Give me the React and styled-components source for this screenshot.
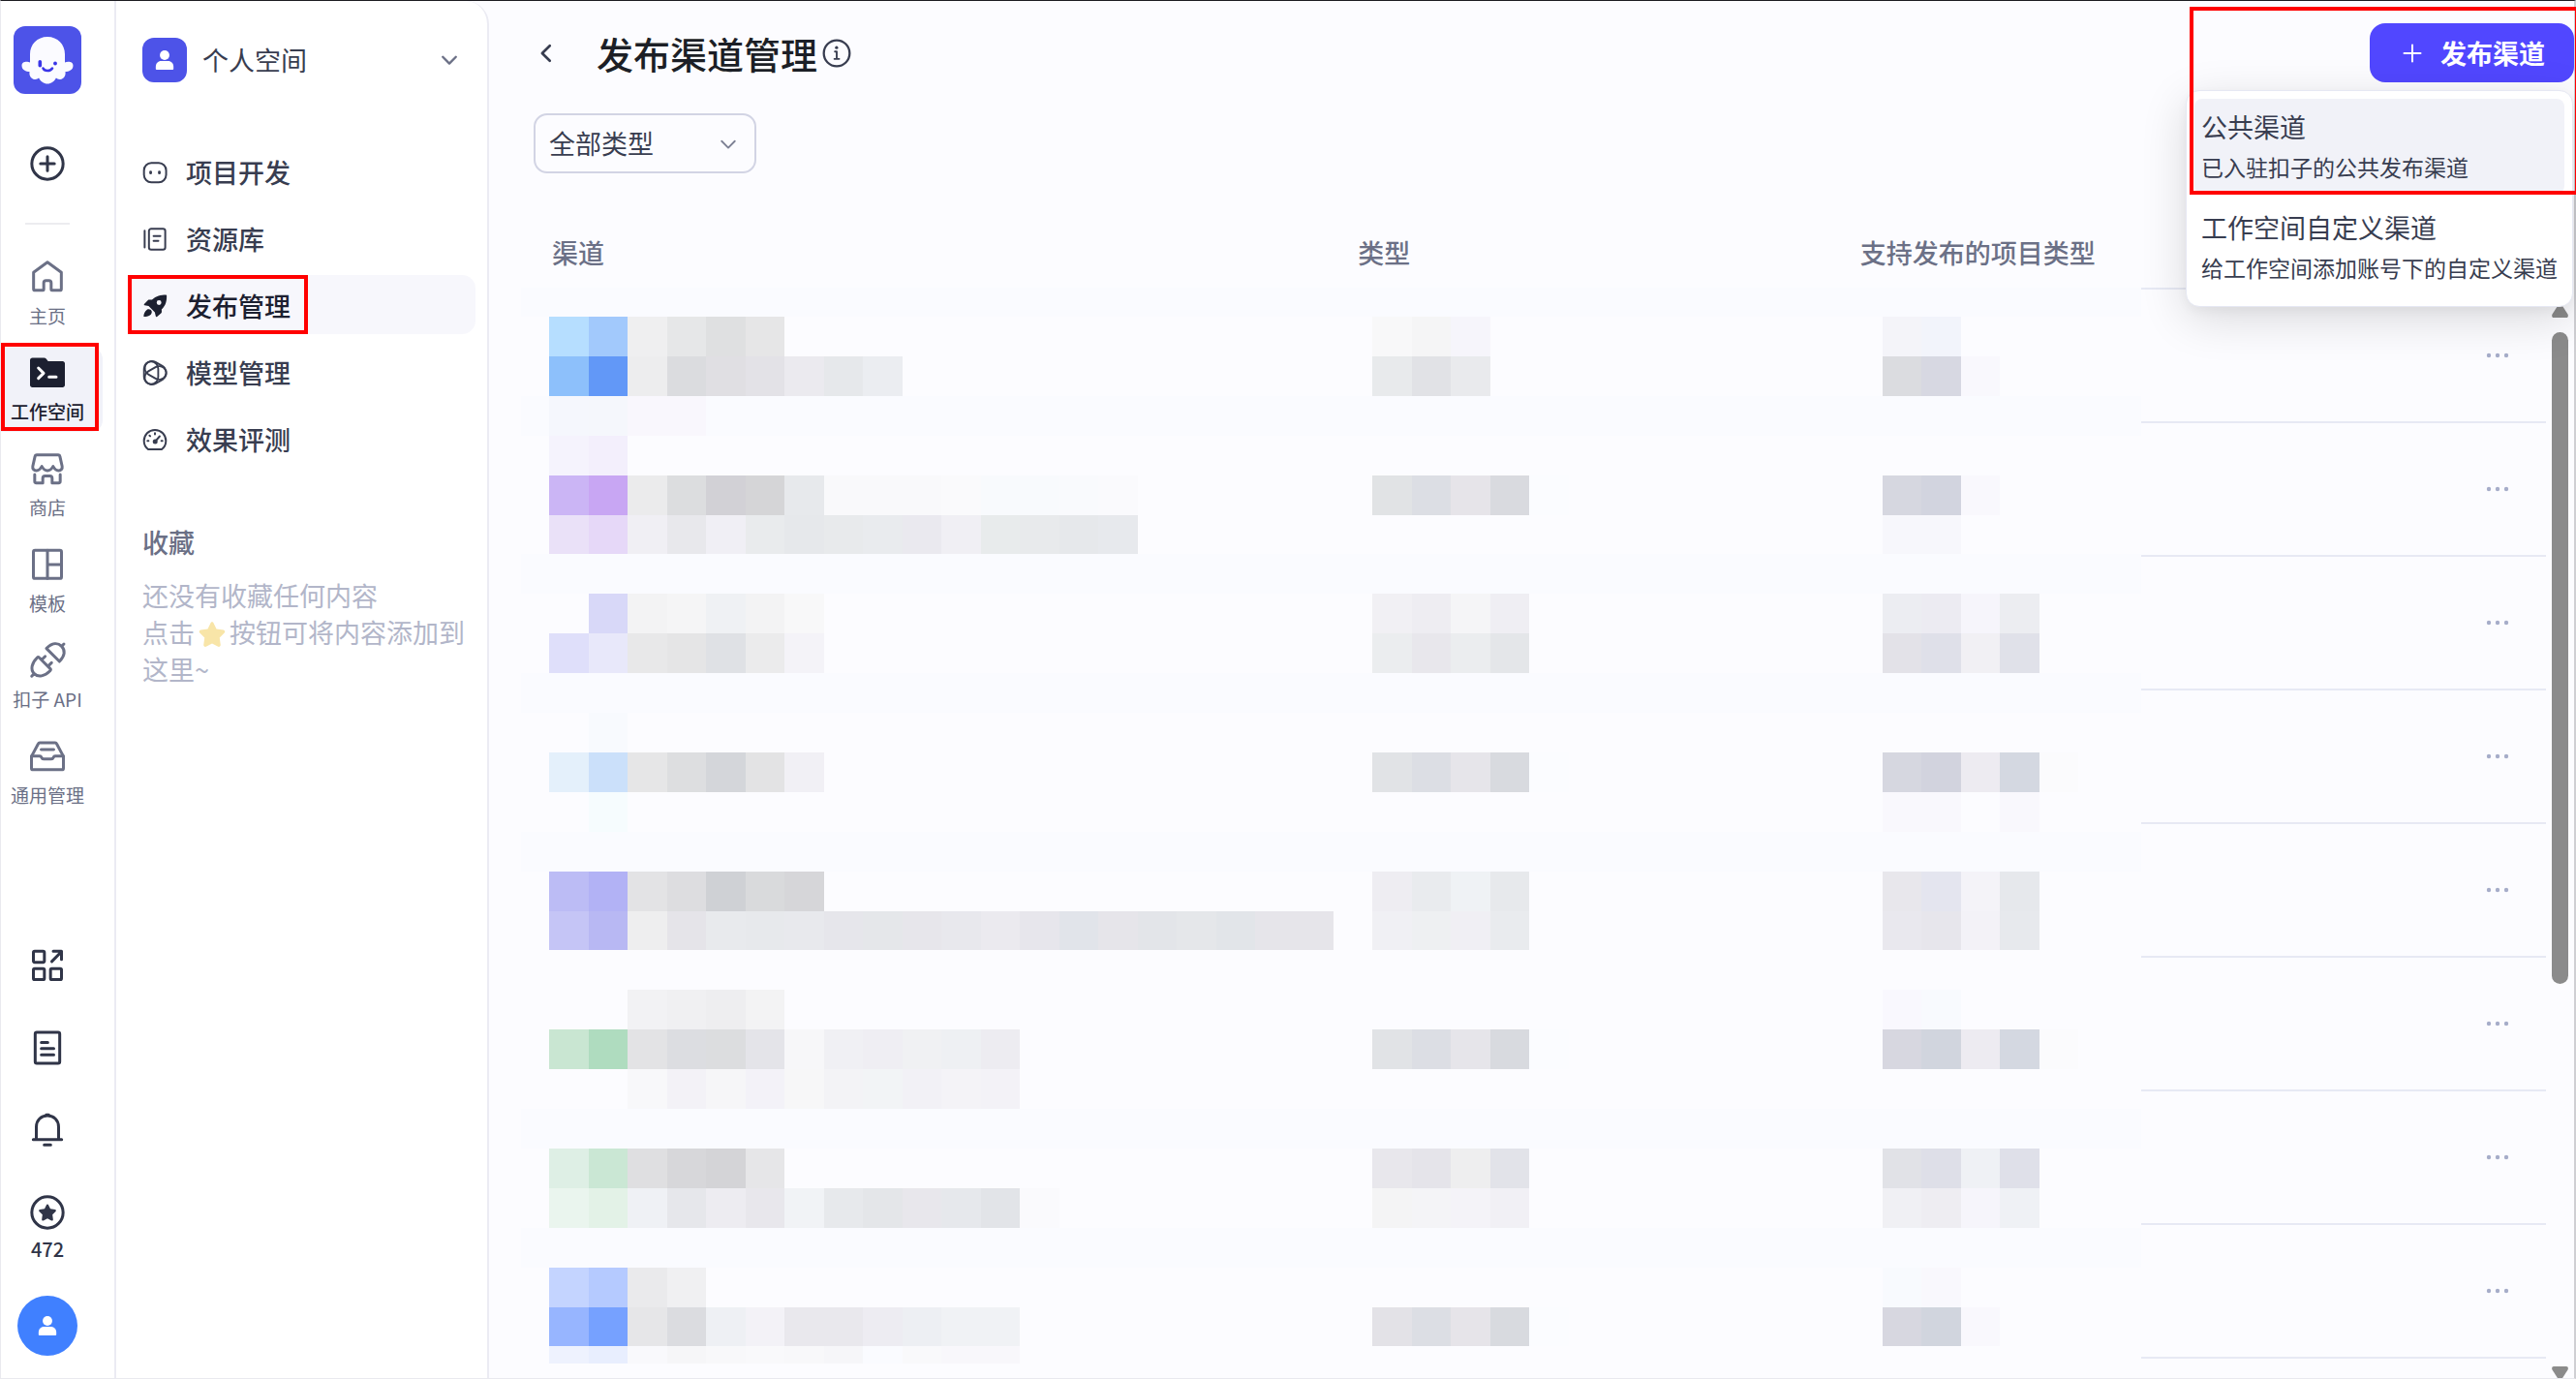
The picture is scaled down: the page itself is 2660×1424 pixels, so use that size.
import React from "react";
import styled, { createGlobalStyle, css } from "styled-components";

/* ---------- icons ---------- */

const Line = ({ size = 40, width = 1.8, children, ...rest }) => (
  <svg
    width={size}
    height={size}
    viewBox="0 0 24 24"
    fill="none"
    stroke="currentColor"
    strokeWidth={width}
    strokeLinecap="round"
    strokeLinejoin="round"
    aria-hidden="true"
    {...rest}
  >
    {children}
  </svg>
);

const LogoIcon = () => (
  <svg width="70" height="70" viewBox="0 0 70 70" aria-hidden="true">
    <rect width="70" height="70" rx="12" fill="#4d53e8" />
    <path
      d="M35 11c-10.500 0-18 7.800-18 18v8.500c-2.500-1.200-8.500-1.500-8.500 3.200 0 4.600 4.500 6.300 8 6.300-.8 5.500 3 8.200 6 8 1.500 0 2.600-.8 3.600-1.500 1.800 3.600 5 6 8.900 6s7.100-2.400 8.900-6c1 .7 2.100 1.500 3.600 1.500 3 .2 6.800-2.500 6-8 3.500 0 8-1.700 8-6.300 0-4.700-6-4.400-8.500-3.200V29c0-10.200-7.500-18-18-18z"
      fill="#fbfbff"
    />
    <rect x="25.500" y="35" width="3.600" height="7.500" rx="1.800" fill="#3a35e8" />
    <circle cx="43" cy="38.500" r="1.900" fill="#3a35e8" />
    <path d="M30.500 43.500c1.500 3.300 7.500 3.300 9.500 0" stroke="#3a35e8" strokeWidth="2.600" strokeLinecap="round" fill="none" />
  </svg>
);

const PlusCircleIcon = () => (
  <Line>
    <circle cx="12" cy="12" r="9.700" />
    <path d="M12 7.700v8.600M7.700 12h8.600" />
  </Line>
);

const HomeIcon = () => (
  <Line>
    <path d="M3.400 9.100v10.200c0 .6.4 1 1 1h4.800c.3 0 .5-.2.5-.5v-4.200c0-.8.6-1.400 1.400-1.400h1.800c.8 0 1.400.6 1.400 1.400v4.200c0 .3.2.5.5.5h4.800c.6 0 1-.4 1-1V9.100L12 2.900z" />
  </Line>
);

const WorkspaceIcon = () => (
  <Line>
    <path
      d="M1.200 4.200c0-.9.6-1.500 1.500-1.500h7.200c.5 0 1 .2 1.300.6l1.200 1.500h8.900c.9 0 1.500.6 1.500 1.500v13.200c0 .9-.6 1.500-1.500 1.500H2.700c-.9 0-1.500-.6-1.500-1.500z"
      fill="currentColor"
      stroke="none"
    />
    <path d="M6.400 9l3.200 3.200-3.200 3.200M13 14.600h4.400" stroke="#fff" />
  </Line>
);

const StoreIcon = () => (
  <Line>
    <path d="M5.400 3.400h13.200c.6 0 1 .4 1.100.9l1.400 6.200c.3 1.600-.8 2.700-2.200 2.700-1.500 0-2.500-.9-3.400-2.600-.9 1.700-2 2.600-3.500 2.600s-2.600-.9-3.500-2.600c-.9 1.700-1.900 2.600-3.400 2.600-1.400 0-2.500-1.100-2.200-2.700l1.400-6.200c.1-.5.500-.9 1.100-.9z" />
    <path d="M4.100 15.600v4.200c0 .6.400 1 1 1h4v-2.800c0-.9.600-1.500 1.400-1.500h3c.8 0 1.400.6 1.400 1.500v2.800h4c.6 0 1-.4 1-1v-4.200" />
  </Line>
);

const TemplateIcon = () => (
  <Line>
    <rect x="3.300" y="3.200" width="17.400" height="17.400" rx="1" />
    <path d="M12 3.200v17.400M12 12h8.700" />
  </Line>
);

const PlugIcon = () => (
  <Line>
    <g transform="rotate(45 12 12)">
      <path d="M6.300 7.200h11.400c0-4.800-2.200-7.600-5.700-7.600S6.300 2.400 6.300 7.200zM12-.4v-2" />
      <path d="M7.300 14.400h9.400c.6 0 1 .4 1 1 0 4.800-2.200 8.200-5.700 8.200s-5.700-3.400-5.700-8.200c0-.6.4-1 1-1zM12 23.800v2M9.200 14.400v-3.200M14.800 14.400v-3.200" />
    </g>
  </Line>
);

const InboxIcon = () => (
  <Line>
    <path d="M2.100 12.100l4.200-7.900c.2-.4.500-.6.900-.6h9.600c.4 0 .7.200.9.600l4.200 7.900v7.200c0 .6-.4 1-1 1H3.100c-.6 0-1-.4-1-1z" />
    <path d="M2.100 11.900h5.100c.6 0 .9.300 1.100.8.300.7.600 1 1.300 1h4.800c.7 0 1-.3 1.300-1 .2-.5.5-.8 1.100-.8h5.100M8.100 7.800h7.800" />
  </Line>
);

const AppsIcon = () => (
  <Line>
    <rect x="3.300" y="3.200" width="6.800" height="6.800" rx=".8" />
    <rect x="3.300" y="13.900" width="6.800" height="6.800" rx=".8" />
    <rect x="13.900" y="13.900" width="6.800" height="6.800" rx=".8" />
    <path d="M14.700 9.500l5.800-5.900M15.600 3.200h5.100v5.100" />
  </Line>
);

const DocIcon = () => (
  <Line>
    <rect x="4.400" y="2.400" width="15.200" height="19.200" rx="1" />
    <path d="M8.200 8.700h4M8.200 12.500h7.700M8.200 16.300h7.700" />
  </Line>
);

const BellIcon = () => (
  <Line>
    <path d="M5.100 17.600V10c0-4.200 3-7 6.900-7s6.900 2.800 6.900 7v7.600M3.200 17.800h17.600M10 21.200h4M11.200 2.500h1.600" />
  </Line>
);

const starPath =
  "M12 6.900c.3 0 .5.200.6.400l1.200 2.500 2.900.4c.6.100.8.800.4 1.200l-2 2 .4 2.900c.1.600-.5 1-1 .8L12 15.800l-2.500 1.300c-.5.200-1.100-.2-1-.8l.4-2.900-2-2c-.4-.4-.2-1.100.4-1.200l2.900-.4 1.200-2.500c.1-.2.300-.4.600-.4z";

const CreditIcon = () => (
  <Line>
    <circle cx="12" cy="12" r="9.700" />
    <path d={starPath} fill="currentColor" stroke="none" />
  </Line>
);

const UserIcon = ({ size }) => (
  <svg width={size} height={size} viewBox="0 0 24 24" fill="#fff" aria-hidden="true">
    <circle cx="12" cy="6.600" r="5.400" />
    <path d="M2 19.500c0-3.800 2.400-6.500 6.200-6.500h7.600c3.800 0 6.200 2.700 6.200 6.500v2.200c0 .8-.6 1.300-1.300 1.300H3.300c-.7 0-1.300-.5-1.300-1.300z" />
  </svg>
);

const BotIcon = () => (
  <Line size={28} width={1.7}>
    <rect x="2.300" y="3.700" width="19.600" height="17" rx="6.500" />
    <path d="M8.200 11.600v1M15.900 11.600v1" strokeWidth="2.400" />
  </Line>
);

const LibraryIcon = () => (
  <Line size={28} width={1.7}>
    <rect x="6.700" y="2.800" width="14.400" height="18.400" rx="2" />
    <path d="M2.900 4.500v14.800M10.800 9.200h6M10.800 13.400h4.200" />
  </Line>
);

const RocketIcon = () => (
  <svg width="28" height="28" viewBox="0 0 24 24" fill="currentColor" aria-hidden="true">
    <path
      fillRule="evenodd"
      d="M21.700 2.100c.4 0 .7.300.7.700.1 4.700-.8 8.700-4.500 12.200l.1 2.200c0 .5-.2 1-.6 1.300l-3.500 3c-.5.400-1.100.1-1.200-.4l-.8-3.500-5.500-5.500-3.500-.7c-.6-.1-.8-.8-.4-1.200l3.300-3.300c.3-.4.800-.5 1.300-.5l2.300.1c3.600-3.500 7.800-4.400 12.300-4.400zM15.600 6.900a2.100 2.100 0 1 0 0 4.200 2.100 2.100 0 0 0 0-4.200z"
    />
    <path d="M5 15.200c1.500-1 3.600-.2 4.100 1.400.4 1.400-.2 2.800-1.500 3.600-1.600.9-3.500 1.300-5 1.300-.4 0-.6-.3-.6-.6.100-1.800.9-4.300 3-5.700z" />
  </svg>
);

const ModelIcon = () => (
  <Line size={28} width={1.6}>
    {[0, 120, 240].map((angle) => (
      <rect key={angle} x="2.300" y="2" width="12.600" height="20" rx="6.300" transform={`rotate(${angle} 11.200 12)`} />
    ))}
  </Line>
);

const GaugeIcon = () => (
  <Line size={28} width={1.7}>
    <path d="M6 20.600c-2.200-1.700-3.700-4.300-3.700-7.500 0-5.400 4.200-9.700 9.700-9.700s9.700 4.300 9.700 9.700c0 3.200-1.500 5.800-3.700 7.500z" />
    <path d="M12 6.300v.9M7.200 8.300l.6.600M5.400 13.100h.9M17.700 13.100h.9" />
    <path d="M12.400 13.400l3.800-4.400" />
    <circle cx="12.200" cy="13.700" r="1.300" fill="currentColor" />
  </Line>
);

const InfoIcon = () => (
  <Line size={32} width={1.7}>
    <circle cx="12" cy="12" r="10" />
    <path d="M10.600 10.700H12v5.500M10.200 16.400h3.700" strokeWidth="1.400" />
    <circle cx="11.900" cy="7.600" r="1.200" fill="currentColor" stroke="none" />
  </Line>
);

const Chevron = ({ size = 28, width = 2, color = "#6b7086", turn = 0 }) => (
  <Line size={size} width={width} stroke={color}>
    <path d="M6.200 9.200l5.800 5.900 5.800-5.900" transform={`rotate(${turn} 12 12)`} />
  </Line>
);

const PlusIcon = () => (
  <Line size={24} width={2}>
    <path d="M12 3.500v17M3.500 12h17" />
  </Line>
);

const DotsIcon = () => (
  <svg width="24" height="12" viewBox="0 0 24 12" fill="#a6adc9" aria-hidden="true">
    <circle cx="3" cy="6" r="2.200" />
    <circle cx="12" cy="6" r="2.200" />
    <circle cx="21" cy="6" r="2.200" />
  </svg>
);

/* ---------- data ---------- */

const railItems = [
  { label: "主页", Icon: HomeIcon },
  { label: "工作空间", Icon: WorkspaceIcon, active: true },
  { label: "商店", Icon: StoreIcon },
  { label: "模板", Icon: TemplateIcon },
  { label: "扣子 API", Icon: PlugIcon },
  { label: "通用管理", Icon: InboxIcon },
];

const navItems = [
  { label: "项目开发", Icon: BotIcon },
  { label: "资源库", Icon: LibraryIcon },
  { label: "发布管理", Icon: RocketIcon, active: true },
  { label: "模型管理", Icon: ModelIcon },
  { label: "效果评测", Icon: GaugeIcon },
];

const menuItems = [
  { title: "公共渠道", desc: "已入驻扣子的公共发布渠道", active: true },
  { title: "工作空间自定义渠道", desc: "给工作空间添加账号下的自定义渠道" },
];

const rows = [1, 2, 3, 4, 5, 6, 7, 8];

// masked cells: [row, first column, colours from left to right]
const tiles = [
  [0, 0, "b6deff a2c9fc efeff0 e6e7e8 dfe0e1 e6e6e7"],
  [0, 21, "f8f8f9 f5f5f6 f6f5fb"],
  [0, 34, "f4f4f9 f2f4fb"],
  [1, 0, "8dc0fb 6298f7 ededee dbdcdf e0dfe3 e3e2e7 ebeaef e6e8eb ebedf1"],
  [1, 21, "e8eaec e1e2e6 e9eaed"],
  [1, 34, "dbdce0 d7d8e2 f9f8fd"],
  [2, 0, "f5f7fd f5f7fc f9f7fd f9f7fd"],
  [3, 0, "f5f3fd f3effc"],
  [4, 0, "cbb5f5 c8a6f3 ebebec dcdddf d2d1d6 d5d5d7 e7e9ec f9f9fb f9f9fb f9f9fb fafafc f8fafd f8fafd f9fafd fafafd"],
  [4, 21, "e1e3e5 dcdee4 e6e4e9 d9dadf fbfcff"],
  [4, 34, "d6d7e0 d2d4df f9f8fd"],
  [5, 0, "eae1f8 e6d8f8 f0eff4 e8e8ec f0eff5 e9ebed e6e8eb e8eaec e9ebee eae9ef f0eff4 e8ebec e8eaec e6e8eb e7e9ed"],
  [5, 34, "f7f7fc f7f7fc"],
  [7, 1, "d8d8f8 f3f3f4 f5f5f6 eff1f4 f3f3f4 f8f8f9"],
  [7, 21, "f1f0f4 eeedf2 f5f5f7 efeef3"],
  [7, 34, "ecedf2 ecebf2 f6f5fb ecedf1"],
  [8, 0, "dfdffa e8e8fa e8e8e9 e5e5e6 dfe1e5 ebebec f4f3f8"],
  [8, 21, "ebedef e8e7ec ebedef e4e6e9"],
  [8, 34, "e3e2e8 dfe0e9 f1f0f4 e0e1e9"],
  [10, 1, "f8fafe"],
  [11, 0, "e4f0fb cbe0fa e6e6e7 dddee0 d4d6da e3e3e4 f1f0f5"],
  [11, 21, "e1e3e6 dcdee4 e6e5ea d8dadf fbfcff"],
  [11, 34, "d6d7e0 d2d3de edebf1 d4d8e1 fbfbfd"],
  [12, 1, "f6fcfe"],
  [12, 34, "f9f8fd f9f8fd fcfcff f9f8fd"],
  [14, 0, "bcbcf5 b2b2f5 e3e3e5 dddde0 cfd1d5 d9dadc d6d6d9"],
  [14, 21, "eeedf2 e9ebee eff2f5 e7e9ec"],
  [14, 34, "e8e7ec e4e5ef f4f3f8 e6e8ec"],
  [15, 0, "c5c5f6 b8b8f3 eeeeef e5e4e9 e8eaed e7e9ec e8e9ed e6e6eb e5e7ea e7e6eb e8e8ed ebeaef e7e6ec e1e4ea e6e5ea e3e5e9 e5e7ea e2e5e9 e6e5ea e6e5ea"],
  [15, 21, "f0f0f4 eef0f2 f0eff4 e9ebee"],
  [15, 34, "e9e8ee e7e6ec f3f2f7 e7e9ed"],
  [17, 2, "f2f2f4 f0f0f2 eeeef0 f3f3f4"],
  [17, 34, "f9f8fe f8fafe"],
  [18, 0, "c9e6d2 afdcbf e3e3e5 dcdde1 dcdddf e4e4e9 f7f7f9 f0f0f4 efeef3 f0f1f3 eef0f3 edecf1"],
  [18, 21, "e1e3e6 dcdee4 e6e5ea d8dadf fbfcff"],
  [18, 34, "d7d7e0 d1d5de edebf1 d4d8e1 fbfbfd"],
  [19, 2, "f8f8fa f3f2f7 f6f6f8 f3f2f8 f7f7f8 f3f3f6 f2f4f6 f2f1f6 f4f3f7 f3f2f7"],
  [21, 0, "deefe5 cae7d4 dfdfe1 d7d7da d4d4d7 e6e6e8"],
  [21, 21, "e8e7ec e5e4ea eeeeef e2e3e9"],
  [21, 34, "e1e2e7 dedfe8 eff1f5 dfe0e9"],
  [22, 0, "eaf5ee e3f2e7 eff1f5 e6e7eb edecf1 e8e7ec f1f3f6 e7e9ec e4e6e9 e8e7ec e6e8ec e2e4e8 fafafd"],
  [22, 21, "f4f4f5 f4f4f7 f4f3f8 f1f0f5"],
  [22, 34, "f0f0f4 eeedf2 f6f5fb eff1f5"],
  [24, 0, "c4d4ff b5caff eaeaec f0f0f2"],
  [24, 34, "f8fafe f9f8fd"],
  [25, 0, "97b5ff 76a1ff e6e6e8 dbdce0 eef0f4 f3f2f7 e9e8ed e9e8ed edecf2 edeff3 f0f2f5 f0f2f5"],
  [25, 21, "e3e2e7 dcdee4 e6e4e9 d8dadf fbfcff"],
  [25, 34, "d7d7e0 d1d5de f9f8fd"],
  [26, 0, "eef2fe e8eefe f9f9fc f6f6f8 f8f8fa f9f9fb f8f8fa f6f6f9 fafbff f9f9fb f8f7fb f8f7fb"],
];

const bands = [-1, 2, 6, 9, 13, 20, 23];
const CELL_W = 40.48;
const CELL_H = 40.9;

// pixelated cover that hides the channel names
const Mosaic = () => (
  <MosaicLayer viewBox="0 0 1672 1111" preserveAspectRatio="none" shapeRendering="crispEdges" aria-hidden="true">
    <rect width="1672" height="1111" fill="#fcfcff" />
    {bands.map((row) => (
      <rect key={row} x="0" y={30 + row * CELL_H} width="1672" height={CELL_H} fill="#fafbff" />
    ))}
    {tiles.map(([row, col, colors]) =>
      colors.split(" ").map((color, i) => (
        <rect
          key={`${row}-${col + i}`}
          x={29 + (col + i) * CELL_W}
          y={30 + row * CELL_H}
          width={CELL_W}
          height={CELL_H}
          fill={`#${color}`}
        />
      ))
    )}
  </MosaicLayer>
);

export default function App() {
  return (
    <>
      <GlobalStyle />
      <Window>
        <Rail>
          <RailColumn>
            <LogoLink href="#" aria-label="扣子">
              <LogoIcon />
            </LogoLink>
            <IconButton type="button" aria-label="创建">
              <PlusCircleIcon />
            </IconButton>
            <Divider />
            <RailNav>
              {railItems.map(({ label, Icon, active }) => (
                <RailLink href="#" key={label} $active={active}>
                  <Icon />
                  <span>{label}</span>
                </RailLink>
              ))}
            </RailNav>
            <RailFooter>
              <IconButton type="button" aria-label="应用">
                <AppsIcon />
              </IconButton>
              <IconButton type="button" aria-label="文档">
                <DocIcon />
              </IconButton>
              <IconButton type="button" aria-label="通知">
                <BellIcon />
              </IconButton>
              <CreditButton type="button">
                <CreditIcon />
                <span>472</span>
              </CreditButton>
            </RailFooter>
            <AvatarButton type="button" aria-label="账号">
              <UserIcon size={22} />
            </AvatarButton>
          </RailColumn>
        </Rail>

        <Sidebar>
          <SpaceButton type="button">
            <SpaceAvatar>
              <UserIcon size={22} />
            </SpaceAvatar>
            <span>个人空间</span>
            <Chevron />
          </SpaceButton>
          <SideNav>
            {navItems.map(({ label, Icon, active }) => (
              <SideLink href="#" key={label} $active={active}>
                <Icon />
                <span>{label}</span>
              </SideLink>
            ))}
          </SideNav>
          <Favorites>
            <h2>收藏</h2>
            <p>
              还没有收藏任何内容
              <br />
              点击
              <Star viewBox="6 6 12 12" aria-hidden="true">
                <path d={starPath} />
              </Star>
              按钮可将内容添加到
              <br />
              这里~
            </p>
          </Favorites>
        </Sidebar>

        <Main>
          <Header>
            <BackButton type="button" aria-label="返回">
              <Chevron turn={90} color="#383d50" size={32} />
            </BackButton>
            <Title>发布渠道管理</Title>
            <InfoIcon />
            <PublishButton type="button">
              <PlusIcon />
              发布渠道
            </PublishButton>
            <Menu role="menu">
              {menuItems.map((item) => (
                <MenuItem type="button" role="menuitem" key={item.title} $active={item.active}>
                  <strong>{item.title}</strong>
                  <span>{item.desc}</span>
                </MenuItem>
              ))}
            </Menu>
          </Header>

          <Filter>
            <select aria-label="渠道类型" defaultValue="all">
              <option value="all">全部类型</option>
            </select>
            <Chevron color="#7d8194" width={1.6} />
          </Filter>

          <List>
            <TableArea>
              <Table>
                <thead>
                  <tr>
                    <th scope="col">渠道</th>
                    <th scope="col">类型</th>
                    <th scope="col">支持发布的项目类型</th>
                    <th aria-label="操作" />
                  </tr>
                </thead>
                <tbody>
                  {rows.map((row) => (
                    <tr key={row}>
                      <td />
                      <td />
                      <td />
                      <td>
                        <MoreButton type="button" aria-label="更多">
                          <DotsIcon />
                        </MoreButton>
                      </td>
                    </tr>
                  ))}
                </tbody>
              </Table>
              <Mosaic />
            </TableArea>
            <ScrollBar>
              <svg width="17" height="16" viewBox="0 0 17 16" aria-hidden="true">
                <path d="M8.500 0l8 12.500c.8 1.500.3 3.500-1.500 3.500H2C.2 16-.3 14 .5 12.500z" />
              </svg>
              <Track>
                <Thumb />
              </Track>
              <svg width="17" height="12" viewBox="0 0 17 12" aria-hidden="true">
                <path d="M8.500 16L.5 3.500C-.3 2 .2 0 2 0h13c1.800 0 2.300 2 1.500 3.500z" />
              </svg>
            </ScrollBar>
          </List>
        </Main>
      </Window>
    </>
  );
}

const GlobalStyle = createGlobalStyle`
  *, *::before, *::after {
    box-sizing: border-box;
  }
  body {
    margin: 0;
    overflow: hidden;
    font-family: "Noto Sans CJK SC", "Noto Sans", sans-serif;
    font-size: 27px;
    line-height: 38px;
    color: #383d50;
  }
  button, select {
    font: inherit;
    color: inherit;
    background: none;
    border: none;
    padding: 0;
    cursor: pointer;
  }
  a {
    color: inherit;
    text-decoration: none;
  }
  svg {
    display: block;
    flex-shrink: 0;
  }
`;

const Window = styled.div`
  display: flex;
  height: 100vh;
  background-color: #fcfcff;
  border: 1px solid #e9e9ef;
  border-top-color: #1c1c22;
  border-right: 2px solid #cfcfd3;
`;

// red frame drawn over the step the reader should follow
const redFrame = css`
  content: "";
  position: absolute;
  border: 4px solid #ff0000;
  pointer-events: none;
`;

const Rail = styled.nav`
  width: 119px;
  flex-shrink: 0;
  overflow: hidden;
  background-color: white;
  border-right: 2px solid #ebebf3;
`;

const RailColumn = styled.div`
  display: flex;
  flex-direction: column;
  align-items: center;
  width: 114px;
  height: 100%;
  margin-left: -9px;
  padding: 26px 0 23px;
`;

const LogoLink = styled.a`
  margin-bottom: 52px;
`;

const IconButton = styled.button`
  color: #303548;
`;

const Divider = styled.hr`
  width: 46px;
  height: 2px;
  margin: 41px 0 28px;
  border: none;
  background-color: #ececf0;
`;

const RailNav = styled.div`
  display: flex;
  flex-direction: column;
  gap: 12px;
  width: 100%;
`;

const RailLink = styled.a`
  position: relative;
  display: flex;
  flex-direction: column;
  align-items: center;
  gap: 7px;
  height: 87px;
  padding-top: 6px;
  border-radius: 12px;
  font-size: 19px;
  line-height: 26px;
  font-weight: ${(props) => (props.$active ? 500 : 400)};
  color: ${(props) => (props.$active ? "#1c2030" : "#6b7086")};
  background-color: ${(props) => (props.$active ? "#f1f2f9" : "transparent")};

  ${(props) =>
    props.$active &&
    css`
      &::after {
        ${redFrame}
        inset: -5px 4px 1px 9px;
      }
    `}
`;

const RailFooter = styled.div`
  display: flex;
  flex-direction: column;
  align-items: center;
  gap: 45px;
  margin-top: auto;
`;

const CreditButton = styled(IconButton)`
  display: flex;
  flex-direction: column;
  align-items: center;
  gap: 6px;
  font-size: 20px;
  line-height: 24px;
  font-weight: 500;
`;

const AvatarButton = styled.button`
  display: flex;
  align-items: center;
  justify-content: center;
  width: 62px;
  height: 62px;
  margin-top: 36px;
  border-radius: 50%;
  background-color: #4080ff;
`;

const Sidebar = styled.aside`
  width: 385px;
  flex-shrink: 0;
  padding: 38px 12px 0;
  background-color: white;
  border-right: 2px solid #ebebf3;
  border-top-right-radius: 24px;
`;

const SpaceButton = styled.button`
  display: flex;
  align-items: center;
  gap: 16px;
  width: 100%;
  padding: 0 13px 0 15px;
  span + svg {
    margin-left: auto;
  }
`;

const SpaceAvatar = styled.span`
  display: flex;
  align-items: center;
  justify-content: center;
  width: 46px;
  height: 46px;
  border-radius: 12px;
  background-color: #4d53e8;
`;

const SideNav = styled.nav`
  display: flex;
  flex-direction: column;
  gap: 8px;
  margin-top: 61px;
`;

const SideLink = styled.a`
  position: relative;
  display: flex;
  align-items: center;
  gap: 18px;
  height: 61px;
  padding: 2px 14px 0;
  border-radius: 14px;
  font-weight: 500;
  color: ${(props) => (props.$active ? "#1c2030" : "#383d50")};
  background-color: ${(props) => (props.$active ? "#f7f7fc" : "transparent")};

  ${(props) =>
    props.$active &&
    css`
      &::after {
        ${redFrame}
        inset: 0 auto 0 0;
        width: 186px;
      }
    `}
`;

const Favorites = styled.section`
  margin-top: 58px;
  padding-left: 15px;
  h2 {
    margin: 0 0 17px;
    font-size: 27px;
    font-weight: 500;
    color: #6b7086;
  }
  p {
    margin: 0;
    color: #b2b6c9;
  }
`;

const Star = styled.svg`
  display: inline-block;
  width: 30px;
  height: 30px;
  margin: 0 3px;
  vertical-align: -6px;
  fill: #f8e5a8;
`;

const Main = styled.main`
  flex: 1;
  min-width: 0;
  display: flex;
  flex-direction: column;
`;

const Header = styled.header`
  position: relative;
  display: flex;
  align-items: center;
  flex-shrink: 0;
  height: 107px;
  padding-left: 43px;

  &::after {
    ${redFrame}
    z-index: 3;
    top: 6px;
    right: -5px;
    width: 402px;
    height: 194px;
  }
`;

const BackButton = styled.button`
  margin-right: 36px;
`;

const Title = styled.h1`
  margin: 0 4px 0 0;
  font-size: 38px;
  line-height: 54px;
  font-weight: 500;
  color: #1c1f26;
`;

const PublishButton = styled.button`
  display: flex;
  align-items: center;
  gap: 17px;
  height: 61px;
  margin-left: auto;
  padding: 0 30px 0 32px;
  border-radius: 16px;
  font-weight: 700;
  color: white;
  background-color: #5147ff;
`;

const Menu = styled.div`
  position: absolute;
  z-index: 2;
  top: 92px;
  right: 1px;
  display: flex;
  flex-direction: column;
  gap: 6px;
  padding: 8px 8px 12px;
  border: 1px solid #e6e8f3;
  border-radius: 14px;
  background-color: white;
  box-shadow: 0 12px 48px rgba(0, 0, 0, 0.14), 0 4px 12px rgba(0, 0, 0, 0.04);
`;

const MenuItem = styled.button`
  display: flex;
  flex-direction: column;
  align-items: flex-start;
  gap: 3px;
  height: 98px;
  padding: 10px 7px 0;
  border-radius: 8px;
  white-space: nowrap;
  background-color: ${(props) => (props.$active ? "#f1f2f8" : "transparent")};
  strong {
    font-weight: 400;
  }
  span {
    font-size: 23px;
  }
`;

const Filter = styled.div`
  position: relative;
  flex-shrink: 0;
  width: 230px;
  margin: 9px 0 46px 46px;
  select {
    appearance: none;
    display: block;
    width: 100%;
    height: 62px;
    padding: 0 14px;
    border: 2px solid #d2d4e4;
    border-radius: 14px;
  }
  svg {
    position: absolute;
    top: 18px;
    right: 15px;
    pointer-events: none;
  }
`;

const List = styled.div`
  flex: 1;
  min-height: 0;
  display: flex;
  margin-left: 33px;
  overflow: hidden;
`;

const TableArea = styled.div`
  position: relative;
  flex: 1;
`;

const Table = styled.table`
  width: 100%;
  table-layout: fixed;
  border-spacing: 0;
  th {
    height: 74px;
    padding: 0 0 0 32px;
    text-align: left;
    font-weight: 500;
    color: #6b7086;
    border-bottom: 2px solid #e7e9f4;
  }
  th:nth-child(1) {
    width: 39.8%;
  }
  th:nth-child(2) {
    width: 24.8%;
  }
  th:nth-child(4) {
    width: 10%;
  }
  td {
    height: 138px;
    padding: 0 38px 0 0;
    border-bottom: 2px solid #e7e9f4;
  }
`;

const MosaicLayer = styled.svg`
  position: absolute;
  top: 72px;
  left: 0;
  width: 80%;
  height: 1111px;
`;

const MoreButton = styled.button`
  display: block;
  margin-left: auto;
`;

const ScrollBar = styled.div`
  display: flex;
  flex-direction: column;
  align-items: center;
  width: 29px;
  padding-top: 87px;
  fill: #8b8b8b;
`;

const Track = styled.div`
  flex: 1;
  width: 17px;
  margin-top: 15px;
`;

const Thumb = styled.div`
  height: 63%;
  border-radius: 9px;
  background-color: #8b8b8b;
`;
